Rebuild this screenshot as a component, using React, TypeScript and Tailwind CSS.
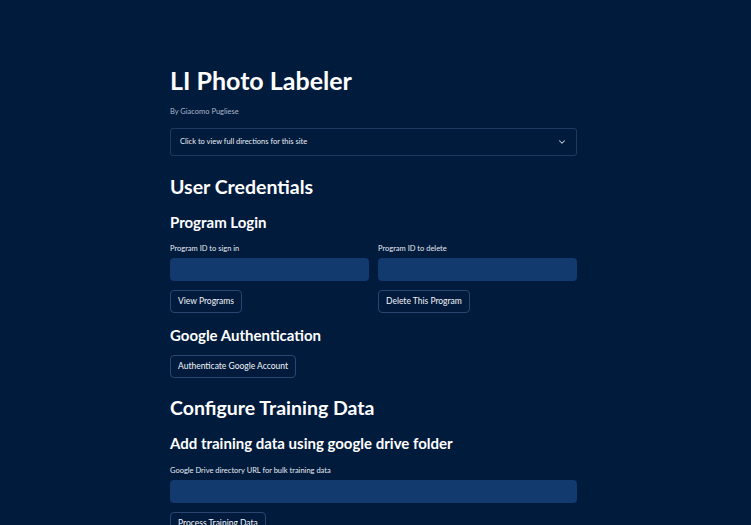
import { ChevronDown } from "lucide-react";

function Field({ label }: { label: string }) {
  return (
    <div className="flex flex-col">
      <label className="text-[7.5px] leading-[10px] text-[#e6eaf1]">{label}</label>
      <div className="mt-[4px] h-[23px] rounded-[4px] bg-[#133a6e]" />
    </div>
  );
}

function Button({ children }: { children: React.ReactNode }) {
  return (
    <button className="h-[23px] w-fit rounded-[4px] border border-[#2a4670] bg-[#021b3d] px-[7px] text-[8.5px] text-[#f2f4f8]">
      {children}
    </button>
  );
}

export default function App() {
  return (
    <div
      className="min-h-[525px] w-full bg-[#011b3d] text-white"
      style={{ fontFamily: "Lato, 'Noto Sans', sans-serif" }}
    >
      <div className="mx-auto flex w-[411px] flex-col pr-[4px] pt-[64px]">
        <h1 className="text-[25px] font-bold leading-[32px]">LI Photo Labeler</h1>
        <p className="mt-[11px] text-[7.5px] leading-[10px] text-[#a9b4c6]">By Giacomo Pugliese</p>
        <div className="mt-[11px] flex h-[28px] items-center justify-between rounded-[3px] border border-[#1f3a60] px-[9px]">
          <span className="text-[7.5px] text-[#e9edf3]">Click to view full directions for this site</span>
          <ChevronDown size={10} strokeWidth={2.5} className="text-[#c9d2e0]" />
        </div>

        <h2 className="mt-[18px] text-[19.5px] font-bold leading-[26px]">User Credentials</h2>
        <h3 className="mt-[12px] text-[15px] font-bold leading-[20px]">Program Login</h3>

        <div className="mt-[12px] grid grid-cols-2 gap-x-[9px]">
          <div className="flex flex-col gap-[9px]">
            <Field label="Program ID to sign in" />
            <Button>View Programs</Button>
          </div>
          <div className="flex flex-col gap-[9px]">
            <Field label="Program ID to delete" />
            <Button>Delete This Program</Button>
          </div>
        </div>

        <h3 className="mt-[12px] text-[15px] font-bold leading-[20px]">Google Authentication</h3>
        <div className="mt-[6px]">
          <Button>Authenticate Google Account</Button>
        </div>

        <h2 className="mt-[17px] text-[19.5px] font-bold leading-[26px]">Configure Training Data</h2>
        <h3 className="mt-[12px] text-[15px] font-bold leading-[20px]">Add training data using google drive folder</h3>
        <div className="mt-[13px] flex flex-col gap-[9px]">
          <Field label="Google Drive directory URL for bulk training data" />
          <Button>Process Training Data</Button>
        </div>
      </div>
    </div>
  );
}
